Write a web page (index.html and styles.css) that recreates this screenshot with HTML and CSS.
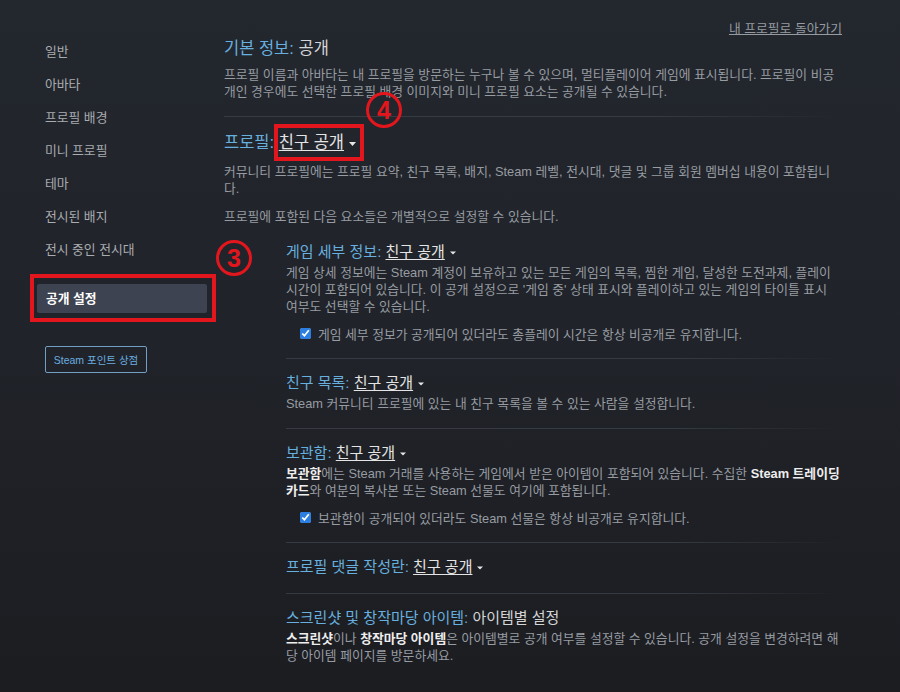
FILE: index.html
```html
<!DOCTYPE html>
<html lang="ko">
<head>
<meta charset="utf-8">
<title>공개 설정</title>
<link rel="stylesheet" href="styles.css">
</head>
<body>
<div class="page">
  <aside class="sidebar">
    <nav class="nav">
      <a class="nav-item">일반</a>
      <a class="nav-item">아바타</a>
      <a class="nav-item">프로필 배경</a>
      <a class="nav-item">미니 프로필</a>
      <a class="nav-item">테마</a>
      <a class="nav-item">전시된 배지</a>
      <a class="nav-item">전시 중인 전시대</a>
      <a class="nav-item active">공개 설정</a>
    </nav>
    <a class="points-btn">Steam 포인트 상점</a>
  </aside>

  <main class="content">
    <div class="back-row"><a class="back-link">내 프로필로 돌아가기</a></div>

    <section class="block block-first">
      <h2 class="heading"><span class="label">기본 정보:</span> <span class="plain">공개</span></h2>
      <p class="desc desc-first">프로필 이름과 아바타는 내 프로필을 방문하는 누구나 볼 수 있으며, 멀티플레이어 게임에 표시됩니다. 프로필이 비공개인 경우에도 선택한 프로필 배경 이미지와 미니 프로필 요소는 공개될 수 있습니다.</p>
    </section>
    <div class="sep"></div>

    <section class="block block-profile">
      <h2 class="heading"><span class="label">프로필:</span> <span class="dropdown">친구 공개</span><svg class="caret" width="7" height="4" viewBox="0 0 7 4"><path d="M0 0H7L3.5 4Z" fill="#e6e6e6"/></svg></h2>
      <p class="desc desc-profile">커뮤니티 프로필에는 프로필 요약, 친구 목록, 배지, Steam 레벨, 전시대, 댓글 및 그룹 회원 멤버십 내용이 포함됩니다.</p>
      <p class="desc desc-note">프로필에 포함된 다음 요소들은 개별적으로 설정할 수 있습니다.</p>
    </section>

    <div class="subs">
      <section class="sub">
        <h3 class="subheading"><span class="label">게임 세부 정보:</span> <span class="dropdown">친구 공개</span><svg class="caret sm" width="6" height="4" viewBox="0 0 6 4"><path d="M0 0.5H6L3 3.5Z" fill="#e6e6e6"/></svg></h3>
        <p class="desc sub-desc">게임 상세 정보에는 Steam 계정이 보유하고 있는 모든 게임의 목록, 찜한 게임, 달성한 도전과제, 플레이 시간이 포함되어 있습니다. 이 공개 설정으로 '게임 중' 상태 표시와 플레이하고 있는 게임의 타이틀 표시 여부도 선택할 수 있습니다.</p>
        <label class="check-row"><input type="checkbox" class="check" checked><span>게임 세부 정보가 공개되어 있더라도 총플레이 시간은 항상 비공개로 유지합니다.</span></label>
      </section>
      <div class="sep"></div>

      <section class="sub">
        <h3 class="subheading"><span class="label">친구 목록:</span> <span class="dropdown">친구 공개</span><svg class="caret sm" width="6" height="4" viewBox="0 0 6 4"><path d="M0 0.5H6L3 3.5Z" fill="#e6e6e6"/></svg></h3>
        <p class="desc sub-desc">Steam 커뮤니티 프로필에 있는 내 친구 목록을 볼 수 있는 사람을 설정합니다.</p>
      </section>
      <div class="sep"></div>

      <section class="sub">
        <h3 class="subheading"><span class="label">보관함:</span> <span class="dropdown">친구 공개</span><svg class="caret sm" width="6" height="4" viewBox="0 0 6 4"><path d="M0 0.5H6L3 3.5Z" fill="#e6e6e6"/></svg></h3>
        <p class="desc sub-desc"><b>보관함</b>에는 Steam 거래를 사용하는 게임에서 받은 아이템이 포함되어 있습니다. 수집한 <b>Steam 트레이딩 카드</b>와 여분의 복사본 또는 Steam 선물도 여기에 포함됩니다.</p>
        <label class="check-row"><input type="checkbox" class="check" checked><span>보관함이 공개되어 있더라도 Steam 선물은 항상 비공개로 유지합니다.</span></label>
      </section>
      <div class="sep"></div>

      <section class="sub">
        <h3 class="subheading"><span class="label">프로필 댓글 작성란:</span> <span class="dropdown">친구 공개</span><svg class="caret sm" width="6" height="4" viewBox="0 0 6 4"><path d="M0 0.5H6L3 3.5Z" fill="#e6e6e6"/></svg></h3>
      </section>
      <div class="sep"></div>

      <section class="sub">
        <h3 class="subheading"><span class="label">스크린샷 및 창작마당 아이템:</span> <span class="plain">아이템별 설정</span></h3>
        <p class="desc sub-desc"><b>스크린샷</b>이나 <b>창작마당 아이템</b>은 아이템별로 공개 여부를 설정할 수 있습니다. 공개 설정을 변경하려면 해당 아이템 페이지를 방문하세요.</p>
      </section>
    </div>
  </main>

  <div class="mark-box mark-box-3"></div>
  <div class="mark-num mark-num-3">3</div>
  <div class="mark-box mark-box-4"></div>
  <div class="mark-num mark-num-4">4</div>
</div>
</body>
</html>
```

FILE: styles.css
```css
html, body {
  margin: 0;
  padding: 0;
  background: #202329;
}

body {
  font-family: "Liberation Sans", "Noto Sans CJK KR", sans-serif;
  color: #9aa0a6;
}

.page {
  position: relative;
  width: 900px;
  height: 692px;
  box-sizing: border-box;
  padding-left: 37px;
  display: flex;
  gap: 17px;
  overflow: hidden;
  background: linear-gradient(to bottom, #23272e 0%, #202329 50%, #1c1d21 100%);
}

/* Sidebar */
.sidebar {
  width: 170px;
  padding-top: 35px;
  display: flex;
  flex-direction: column;
  align-items: flex-start;
}

.nav {
  display: flex;
  flex-direction: column;
  width: 170px;
}

.nav-item {
  display: block;
  height: 33px;
  line-height: 33px;
  padding-left: 8px;
  font-size: 12.8px;
  color: #a9acb0;
}

.nav-item.active {
  margin-top: 18px;
  height: 29px;
  line-height: 29px;
  padding-left: 9px;
  background: #3d4350;
  border-radius: 2px;
  color: #ffffff;
  font-weight: bold;
}

.points-btn {
  margin-top: 33px;
  margin-left: 8px;
  width: 102px;
  height: 27px;
  box-sizing: border-box;
  border: 1px solid #6f9fc4;
  border-radius: 2px;
  display: flex;
  align-items: center;
  justify-content: center;
  font-size: 10.5px;
  color: #6aaee0;
}

/* Main content */
.content {
  width: 618px;
}

.back-row {
  padding-top: 19px;
  height: 17px;
  line-height: 17px;
  text-align: right;
}

.back-link {
  font-size: 12.8px;
  color: #959ba1;
  text-decoration: underline;
}

.heading {
  margin: 0;
  font-size: 16.5px;
  line-height: 22px;
  font-weight: normal;
  white-space: nowrap;
}

.subheading {
  margin: 0;
  font-size: 15px;
  line-height: 20px;
  font-weight: normal;
  white-space: nowrap;
}

.label {
  color: #67afdf;
}

.plain {
  color: #d3d5d7;
}

.dropdown {
  color: #e4e4e4;
  text-decoration: underline;
  text-underline-offset: 2px;
}

.caret {
  display: inline-block;
  margin-left: 5px;
  vertical-align: middle;
}

.desc {
  margin: 0;
  font-size: 12.8px;
  line-height: 17px;
  color: #979ca2;
}

.desc b {
  color: #eeeeee;
  font-weight: bold;
}

.block-first {
  margin-top: 1px;
  padding-bottom: 16px;
}

.desc-first {
  margin-top: 7px;
}

.block-profile {
  padding-top: 14px;
}

.desc-profile {
  margin-top: 10px;
}

.desc-note {
  margin-top: 11px;
}

.sep {
  height: 1px;
  background: linear-gradient(to right, #363a42 0%, #363a42 70%, rgba(54, 58, 66, 0) 100%);
}

.subs {
  margin-top: 3px;
  margin-left: 62px;
}

.sub {
  padding: 14px 0 16px;
}

.sub-desc {
  margin-top: 2px;
}

.check-row {
  margin-top: 10px;
  padding-left: 14px;
  display: flex;
  align-items: center;
  gap: 7px;
  height: 17px;
  font-size: 12.8px;
  color: #979ca2;
}

.check {
  margin: 0;
  width: 11px;
  height: 11px;
  accent-color: #2b7fe3;
}

/* Annotation overlays */
.mark-box {
  position: absolute;
  box-sizing: border-box;
  border: 4px solid #e3161d;
}

.mark-box-3 {
  left: 30px;
  top: 274px;
  width: 186px;
  height: 48px;
}

.mark-box-4 {
  left: 274px;
  top: 124px;
  width: 90px;
  height: 37px;
}

.mark-num {
  position: absolute;
  box-sizing: border-box;
  width: 36px;
  height: 36px;
  border: 3px solid #e3161d;
  border-radius: 50%;
  display: flex;
  align-items: center;
  justify-content: center;
  font-family: "Liberation Sans", sans-serif;
  font-weight: bold;
  font-size: 25px;
  color: #e3161d;
}

.mark-num-3 {
  left: 216px;
  top: 240px;
}

.mark-num-4 {
  left: 366px;
  top: 92px;
}
```
